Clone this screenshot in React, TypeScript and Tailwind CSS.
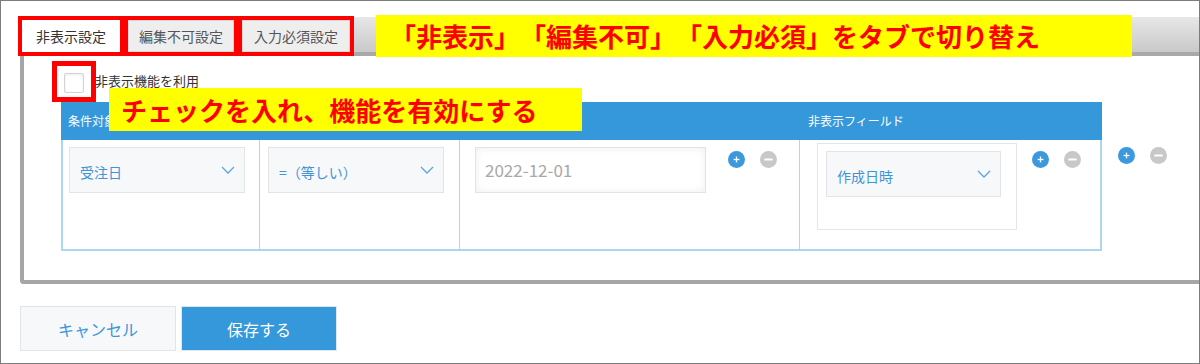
import React from "react";

const FONT = { fontFamily: '"Noto Sans CJK JP", "Noto Sans", sans-serif' };

function Chevron() {
  return (
    <svg width="14" height="8" viewBox="0 0 14 8" className="shrink-0">
      <polyline points="1,1 7,7 13,1" fill="none" stroke="#5aa6de" strokeWidth="1.3" />
    </svg>
  );
}

function PlusIcon() {
  return (
    <svg width="17" height="17" viewBox="0 0 17 17" className="shrink-0">
      <circle cx="8.5" cy="8.5" r="8.5" fill="#3b99df" />
      <line x1="8.5" y1="5.6" x2="8.5" y2="11.4" stroke="#fff" strokeWidth="1.3" />
      <line x1="5.6" y1="8.5" x2="11.4" y2="8.5" stroke="#fff" strokeWidth="1.3" />
    </svg>
  );
}

function MinusIcon() {
  return (
    <svg width="17" height="17" viewBox="0 0 17 17" className="shrink-0">
      <circle cx="8.5" cy="8.5" r="8.5" fill="#c8c8c8" />
      <line x1="4.3" y1="8.5" x2="12.7" y2="8.5" stroke="#fff" strokeWidth="2" />
    </svg>
  );
}

function Select({ label, w }: { label: string; w: string }) {
  return (
    <div
      className={`${w} h-[46px] bg-[#f6f8f9] border border-[#e1e5e8] flex items-center justify-between pl-[10px] pr-[9px]`}
    >
      <span className="text-[14px] text-[#3f94d8] pt-[4px]">{label}</span>
      <Chevron />
    </div>
  );
}

export default function App() {
  return (
    <div
      className="relative w-[1200px] h-[364px] box-border border border-[#7c7c7c] bg-white overflow-hidden [text-spacing-trim:space-all]"
      style={FONT}
    >
      {/* tab strip */}
      <div className="ml-[17px] mt-[15px] h-[40px] flex bg-[linear-gradient(to_bottom,#ffffff_0px,#ffffff_1px,#e7e7e7_1px,#c9c9c9_36px,#a9a9a9_36px,#a9a9a9_40px)]">
        <div className="w-[106px] h-[40px] border-4 border-[#ff0000] box-border">
          <div className="w-full h-full bg-white flex items-center justify-center text-[14px] text-[#333]">
            非表示設定
          </div>
        </div>
        <div className="w-[114px] h-[40px] border-4 border-[#ff0000] box-border">
          <div className="w-full h-full bg-[#eeeeee] border border-[#d6d6d6] flex items-center justify-center text-[14px] text-[#555]">
            編集不可設定
          </div>
        </div>
        <div className="w-[116px] h-[40px] border-4 border-[#ff0000] box-border">
          <div className="w-full h-full bg-[#eeeeee] border border-[#d6d6d6] flex items-center justify-center text-[14px] text-[#555]">
            入力必須設定
          </div>
        </div>
      </div>

      {/* panel */}
      <div className="ml-[19px] h-[228px] box-border border-l-4 border-b-4 border-[#a6a6a6] rounded-bl-[4px] pl-[37px] pt-[17px]">
        <div className="flex items-start ml-[3px] h-[20px]">
          <div className="w-[20px] h-[20px] rounded-[2px] border border-[#d3d3d3] bg-white shadow-[inset_0_1px_3px_rgba(0,0,0,0.08)]" />
          <span className="ml-[11px] mt-[1px] text-[13px] text-[#333] leading-[13px]">非表示機能を利用</span>
        </div>

        <div className="mt-[9px] flex items-start">
          {/* table */}
          <div className="w-[1041px]">
            <div className="h-[38px] bg-[#3498db] flex items-center text-[12px] text-white">
              <div className="w-[739px] pl-[7px]">条件対象フィールド</div>
              <div className="pl-[8px]">非表示フィールド</div>
            </div>
            <div className="h-[111px] flex border-x-2 border-b-2 border-[#a9d9f1]">
              <div className="w-[197px] border-r border-[#a9d9f1] pl-[6px] pt-[7px]">
                <Select label="受注日" w="w-[176px]" />
              </div>
              <div className="w-[200px] border-r border-[#a9d9f1] pl-[8px] pt-[7px]">
                <Select label="=（等しい）" w="w-[176px]" />
              </div>
              <div className="w-[340px] border-r border-[#a9d9f1] pl-[15px] pt-[7px] flex items-start">
                <div className="w-[231px] h-[46px] border border-[#e3e3e3] bg-white shadow-[inset_0_0_8px_rgba(0,0,0,0.07)] flex items-center pl-[9px] text-[17px] text-[#a8a8a8]">
                  2022-12-01
                </div>
                <div className="ml-[22px] mt-[4px] flex gap-[15px]">
                  <PlusIcon />
                  <MinusIcon />
                </div>
              </div>
              <div className="flex-1 pl-[17px] pt-[3px] flex items-start">
                <div className="w-[200px] h-[87px] border border-[#e3e6e8] pl-[8px] pt-[7px]">
                  <Select label="作成日時" w="w-[175px]" />
                </div>
                <div className="ml-[15px] mt-[8px] flex gap-[15px]">
                  <PlusIcon />
                  <MinusIcon />
                </div>
              </div>
            </div>
          </div>
          <div className="ml-[16px] mt-[45px] flex gap-[15px]">
            <PlusIcon />
            <MinusIcon />
          </div>
        </div>
      </div>

      {/* buttons */}
      <div className="ml-[19px] mt-[22px] flex gap-[5px]">
        <div className="w-[156px] h-[45px] bg-[#f6f8f9] border border-[#e1e5e8] flex items-center justify-center text-[16px] text-[#3b95d9]">
          キャンセル
        </div>
        <div className="w-[156px] h-[45px] bg-[#3498db] border border-[#dfe6ec] flex items-center justify-center text-[16px] text-white">
          保存する
        </div>
      </div>

      {/* annotations */}
      <div className="absolute left-[375px] top-[14px] w-[756px] h-[42px] bg-[#ffff00] flex items-center pl-[14px] text-[26px] font-bold text-[#ff0000] leading-none whitespace-nowrap">
        「非表示」「編集不可」「入力必須」をタブで切り替え
      </div>
      <div className="absolute left-[51px] top-[60px] w-[44px] h-[41px] border-[5px] border-[#ff0000] box-border" />
      <div className="absolute left-[108px] top-[87px] w-[473px] h-[43px] bg-[#ffff00] flex items-center pl-[12px] text-[26px] font-bold text-[#ff0000] leading-none whitespace-nowrap">
        チェックを入れ、機能を有効にする
      </div>
    </div>
  );
}
